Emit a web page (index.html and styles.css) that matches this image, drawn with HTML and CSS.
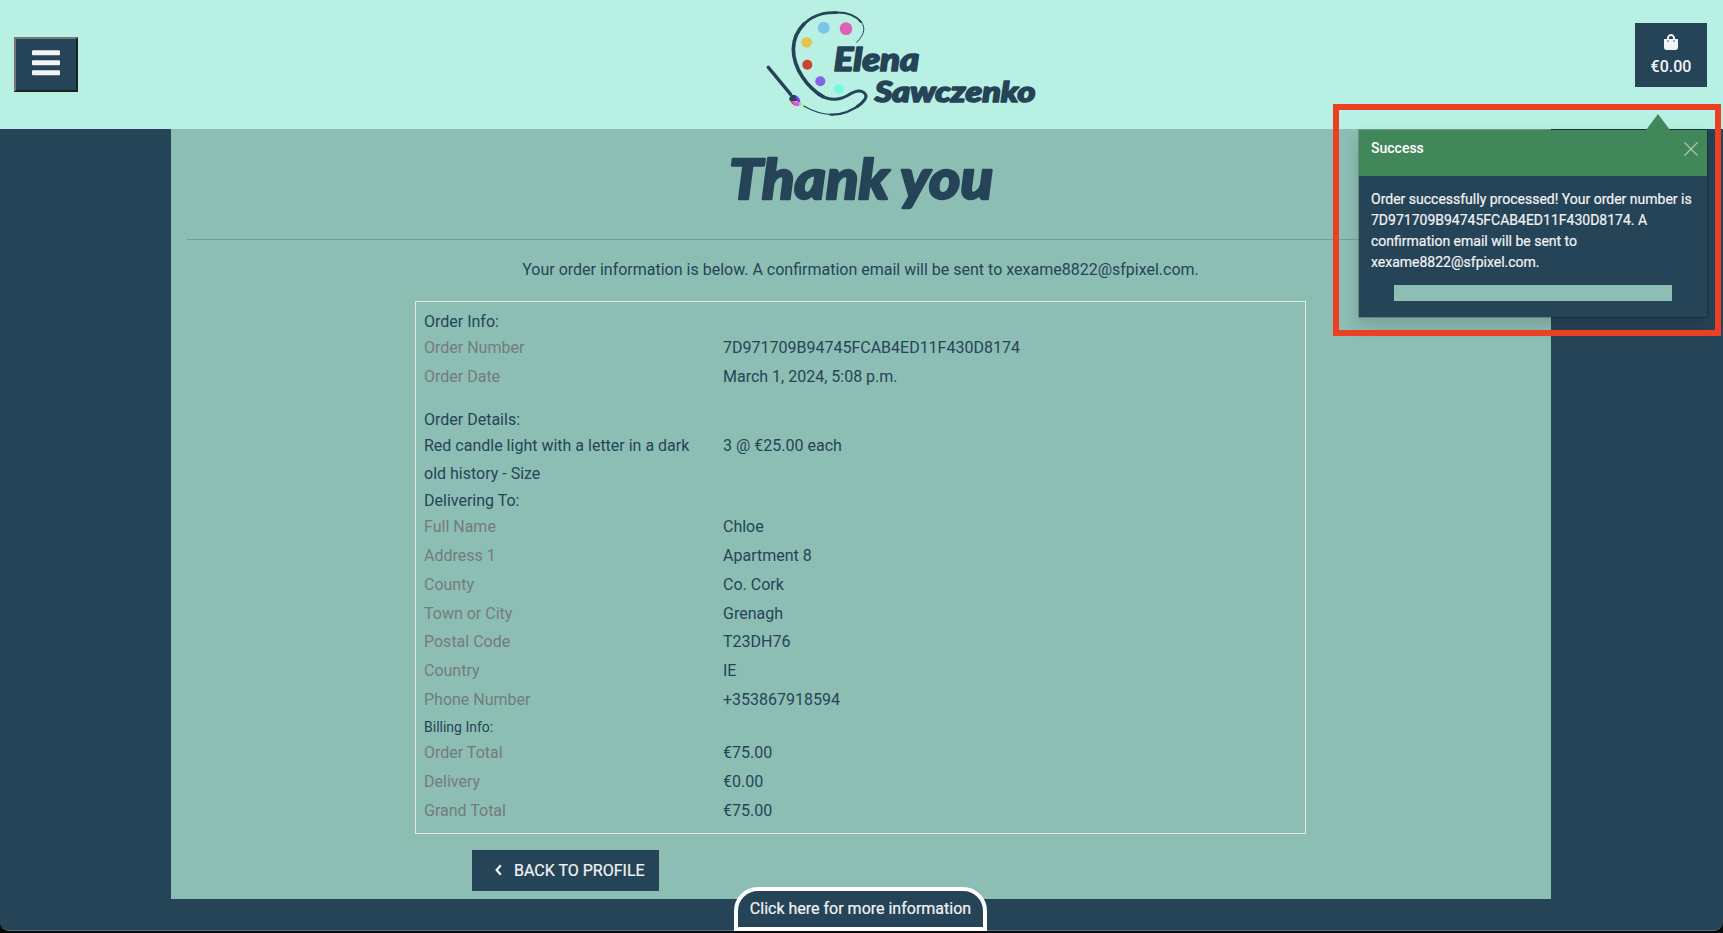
FILE: index.html
```html
<!DOCTYPE html>
<html lang="en">
<head>
<meta charset="utf-8">
<title>Elena Sawczenko - Thank you</title>
<link rel="stylesheet" href="styles.css">
</head>
<body>
<div class="window">
  <header class="header">
    <button class="menu" aria-label="Menu">
      <svg width="28" height="26" viewBox="0 0 28 26"><g fill="#f1f3f5"><rect y=".3" width="28" height="5" rx="1"/><rect y="10.3" width="28" height="5" rx="1"/><rect y="20.3" width="28" height="5" rx="1"/></g></svg>
    </button>
    <svg class="logo" viewBox="0 0 900 390">
      <g fill="none" stroke="#264457" stroke-linecap="round" stroke-linejoin="round">
        <path stroke-width="3" d="M320 127C346 102 348 78 329 60"/>
        <path stroke-width="6" d="M333 66C314 43 280 36 250 38"/>
        <path stroke-width="8" d="M260 38C220 36 182 49 158 77"/>
        <path stroke-width="11" d="M162 72C142 92 131 118 130 146C130 206 172 263 219 290"/>
        <path stroke-width="9" d="M205 283C239 304 267 302 294 286C314 273 329 268 342 278C357 290 340 308 321 320"/>
        <path stroke-width="7" d="M334 311C304 335 273 345 242 344"/>
        <path stroke-width="3.5" d="M250 344C214 343 185 332 160 317"/>
        <path stroke-width="10" d="M55 202L122 283"/>
      </g>
      <path fill="#264457" d="M119 291Q127 281 137 286L147 303L120 303Q115 298 119 291Z"/>
      <path fill="#7b3ff0" d="M136 286Q150 290 151 307L143 308Z"/>
      <path fill="#dd3f8c" d="M120 302L132 304L145 318Q128 319 120 302Z"/>
      <path fill="#ed5bd5" d="M127 304L143 305L150 311L146 319Q136 318 127 304Z"/>
      <path fill="#58cdf0" d="M148 305L155 312L150 317Z"/>
      <path fill="#f0e65a" d="M153 311L162 317L152 320Z"/>
      <circle cx="221" cy="83" r="18" fill="#78c6e8"/>
      <circle cx="288" cy="86" r="19" fill="#dc62b8"/>
      <circle cx="170" cy="127" r="16" fill="#e4c34e"/>
      <circle cx="172" cy="194" r="15" fill="#cf432e"/>
      <circle cx="211" cy="244" r="15" fill="#8462e3"/>
      <circle cx="267" cy="267" r="15" fill="#78f8e1"/>
      <text class="script" x="251" y="212" font-size="96" stroke-width="5" textLength="257" lengthAdjust="spacingAndGlyphs">Elena</text>
      <text class="script" x="374" y="305" font-size="87" stroke-width="5" textLength="482" lengthAdjust="spacingAndGlyphs">Sawczenko</text>
    </svg>
    <a class="bag">
      <svg width="14" height="16" viewBox="0 0 448 512"><path fill="#f1f3f5" d="M352 160v-32C352 57 295 0 224 0S96 57 96 128v32H0v272c0 44 36 80 80 80h288c44 0 80-36 80-80V160h-96zm-192-32c0-35 29-64 64-64s64 29 64 64v32H160v-32zm160 120a24 24 0 1 1 0-48 24 24 0 0 1 0 48zm-192 0a24 24 0 1 1 0-48 24 24 0 0 1 0 48z"/></svg>
      <span>€0.00</span>
    </a>
  </header>

  <main class="content">
    <h1 class="title">
      <svg width="280" height="82" viewBox="0 0 280 82"><text class="script" x="9" y="54" font-size="56" stroke-width="2.4" textLength="264" lengthAdjust="spacingAndGlyphs">Thank you</text></svg>
    </h1>
    <hr class="rule">
    <p class="intro">Your order information is below. A confirmation email will be sent to xexame8822@sfpixel.com.</p>
    <section class="order">
      <h2>Order Info:</h2>
      <dl class="spaced">
        <dt>Order Number</dt><dd>7D971709B94745FCAB4ED11F430D8174</dd>
        <dt>Order Date</dt><dd>March 1, 2024, 5:08 p.m.</dd>
      </dl>
      <h2>Order Details:</h2>
      <dl>
        <dt class="item">Red candle light with a letter in a dark old history - Size</dt><dd>3 @ €25.00 each</dd>
      </dl>
      <h2>Delivering To:</h2>
      <dl>
        <dt>Full Name</dt><dd>Chloe</dd>
        <dt>Address 1</dt><dd>Apartment 8</dd>
        <dt>County</dt><dd>Co. Cork</dd>
        <dt>Town or City</dt><dd>Grenagh</dd>
        <dt>Postal Code</dt><dd>T23DH76</dd>
        <dt>Country</dt><dd>IE</dd>
        <dt>Phone Number</dt><dd>+353867918594</dd>
      </dl>
      <h2 class="small">Billing Info:</h2>
      <dl>
        <dt>Order Total</dt><dd>€75.00</dd>
        <dt>Delivery</dt><dd>€0.00</dd>
        <dt>Grand Total</dt><dd>€75.00</dd>
      </dl>
    </section>
    <a class="back"><svg width="7" height="12" viewBox="0 0 7 12"><path d="M5.8 1.2L1.6 6l4.2 4.8" fill="none" stroke="#f1f3f5" stroke-width="2.2"/></svg><span>BACK TO PROFILE</span></a>
  </main>
  <div class="more">Click here for more information</div>

  <div class="toast">
    <svg class="arrow" width="24" height="16" viewBox="0 0 24 16"><path d="M0 16L12 0L24 16Z" fill="#42875a"/></svg>
    <div class="toast-head"><span>Success</span>
      <svg width="14" height="14" viewBox="0 0 14 14"><path d="M.5.5l13 13M13.5.5l-13 13" stroke="#a5c9b0" stroke-width="1.2"/></svg>
    </div>
    <div class="toast-body">
      <p>Order successfully processed! Your order number is 7D971709B94745FCAB4ED11F430D8174. A confirmation email will be sent to xexame8822@sfpixel.com.</p>
      <div class="bar"></div>
    </div>
  </div>
  <div class="highlight"></div>
</div>
</body>
</html>
```
FILE: styles.css
```css
* { box-sizing: border-box; }
body { margin: 0; height: 933px; overflow: hidden; background: #080a08; font: 16px/28.8px Roboto, sans-serif; color: #264457; }
h1, h2, p, dl, dd { margin: 0; font-weight: 400; }
.window { position: relative; height: 931px; background: #264457; border-bottom: 1px solid #53717c; border-radius: 0 0 9px 9px; }
.header { display: flex; height: 129px; background: #b8f1e3; padding: 0 16px 0 14px; }
.menu { width: 64px; height: 55px; margin-top: 37px; padding: 0 0 3px; background: #264457; border: 2px solid; border-color: #767676 #212121 #212121 #767676; display: flex; align-items: center; justify-content: center; }
.logo { width: 300px; height: 130px; margin-left: 672px; flex: none; }
.script { font-family: Lato, sans-serif; font-weight: 900; font-style: italic; fill: #264457; stroke: #264457; stroke-linejoin: round; }
.bag { width: 72px; height: 64px; margin: 23px 0 0 auto; padding-top: 11px; background: #264457; color: #f1f3f5; display: flex; flex-direction: column; align-items: center; font-weight: 500; }
.bag span { line-height: 34px; }
.content { width: 1380px; height: 770px; margin-left: 171px; padding: 16px; background: #8dbeb3; }
.title { display: flex; justify-content: center; height: 94px; }
.title svg { margin-left: -2px; }
.rule { height: 1px; border: 0; margin: 0; background: #739f99; }
.intro { text-align: center; line-height: 29px; margin: 15px 1px 17px 0; }
.order { width: 891px; height: 533px; margin-left: 228px; border: 1px solid #dfebe8; padding: 8px; }
.order h2 { font-size: 16px; line-height: 24px; }
.order .small { font-size: 14px; line-height: 24.2px; }
.order dl { display: grid; grid-template-columns: 299px 1fr; }
.order .spaced { margin-bottom: 16px; }
.order dt { color: #747b80; padding-right: 20px; }
.order .item { color: #264457; }
.back { display: flex; align-items: center; gap: 12px; width: 187px; height: 41px; margin: 16px 0 0 285px; padding: 1px 0 0 23px; background: #264457; color: #f1f3f5; white-space: nowrap; -webkit-text-stroke: .2px #f1f3f5; }
.back svg { margin-top: -2px; }
.more { position: absolute; left: 734px; top: 887px; width: 253px; height: 44px; border: 4px solid #fff; border-radius: 24px 24px 0 0; background: #264457; color: #f1f3f5; text-align: center; line-height: 35px; white-space: nowrap; -webkit-text-stroke: .2px #f1f3f5; }
.toast { position: absolute; left: 1358px; top: 129px; width: 350px; height: 189px; border: 1px solid rgba(0,0,0,.2); background: #264457; background-clip: padding-box; box-shadow: 0 8px 16px rgba(0,0,0,.15); color: #f1f3f5; font-size: 14px; line-height: 21px; }
.arrow { position: absolute; right: 37px; top: -16px; }
.toast-head { height: 46px; padding: 8px 9px 0 12px; background: #42875a; display: flex; justify-content: space-between; font-weight: 500; color: #fff; }
.toast-head svg { margin-top: 4px; }
.toast-body { padding: 13px 12px 0; font-weight: 400; -webkit-text-stroke: .2px #f1f3f5; }
.bar { width: 278px; height: 16px; margin: 12px 0 0 23px; background: #8dbeb3; }
.highlight { position: absolute; left: 1333px; top: 104px; width: 388px; height: 232px; border: 6px solid #eb4024; }
```
